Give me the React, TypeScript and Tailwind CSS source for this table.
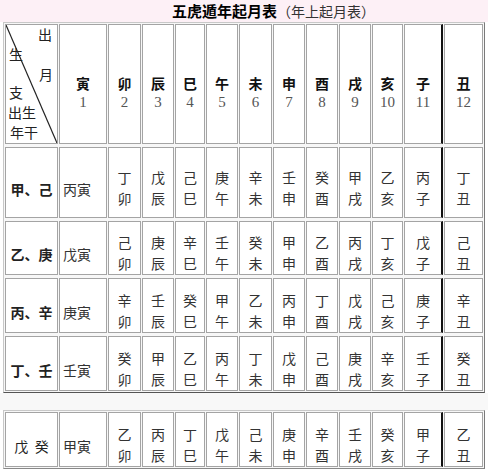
import React from "react";

const cjk = { fontFamily: '"Noto Sans CJK SC", "Noto Sans", sans-serif' };
const serif = { fontFamily: '"Liberation Serif", "Noto Sans CJK SC", serif' };

const branches = ["寅", "卯", "辰", "巳", "午", "未", "申", "酉", "戌", "亥", "子", "丑"];

const rows: { label: string; first: string; rest: string[]; bold: boolean }[] = [
  { label: "甲、己", first: "丙寅", rest: ["丁卯", "戊辰", "己巳", "庚午", "辛未", "壬申", "癸酉", "甲戌", "乙亥", "丙子", "丁丑"], bold: true },
  { label: "乙、庚", first: "戊寅", rest: ["己卯", "庚辰", "辛巳", "壬午", "癸未", "甲申", "乙酉", "丙戌", "丁亥", "戊子", "己丑"], bold: true },
  { label: "丙、辛", first: "庚寅", rest: ["辛卯", "壬辰", "癸巳", "甲午", "乙未", "丙申", "丁酉", "戊戌", "己亥", "庚子", "辛丑"], bold: true },
  { label: "丁、壬", first: "壬寅", rest: ["癸卯", "甲辰", "乙巳", "丙午", "丁未", "戊申", "己酉", "庚戌", "辛亥", "壬子", "癸丑"], bold: true },
];

const last = { label: "戊  癸", first: "甲寅", rest: ["乙卯", "丙辰", "丁巳", "戊午", "己未", "庚申", "辛酉", "壬戌", "癸亥", "甲子", "乙丑"], bold: false };

const gridCols =
  "grid grid-cols-[53px_48px_33px_32px_30px_32px_33px_32px_32px_32px_31px_39px_39px] gap-x-[1px] gap-y-[3px]";

function DataRow({ r }: { r: typeof last }) {
  return (
    <>
      <div
        className={`border border-[#a4a4a4] bg-white flex items-center justify-center pt-[12px] text-[14px] leading-[16px] text-[#222] whitespace-pre ${r.bold ? "font-bold" : ""}`}
      >
        {r.label}
      </div>
      <div className="border border-[#a4a4a4] bg-white flex items-center justify-start pl-[3px] pt-[12px] text-[14px] leading-[16px] text-[#333]">
        {r.first}
      </div>
      {r.rest.map((p, i) => (
        <div
          key={i}
          className={`border border-[#a4a4a4] bg-white flex flex-col items-center justify-center pt-[10px] text-[14px] leading-[21px] text-[#333] ${i === 9 ? "border-r-2 border-r-[#111]" : ""}`}
        >
          <span>{p[0]}</span>
          <span>{p[1]}</span>
        </div>
      ))}
    </>
  );
}

export default function App() {
  return (
    <div className="w-[488px] h-[475px] bg-white overflow-hidden" style={cjk}>
      <div className="h-[22px] bg-[#fdf0f6] pl-[172px] flex items-center">
        <span className="text-[15px] font-bold text-black leading-[18px]">五虎遁年起月表</span>
        <span className="text-[14px] text-[#333] leading-[18px]">（年上起月表）</span>
      </div>

      <div className="ml-[3px] w-fit border border-t-[#c8c8c8] border-l-[#c8c8c8] border-r-[#7a7a7a] border-b-[#555] p-[1px] bg-[#f7f7f7]">
        <div className={`${gridCols} grid-rows-[120px_71px_54px_55px_55px]`}>
          <div className="relative border border-[#a4a4a4] bg-white text-[14px] leading-[14px] text-[#222] flex flex-col">
            <svg className="absolute inset-0 w-full h-full" viewBox="0 0 100 100" preserveAspectRatio="none">
              <line x1="0" y1="0" x2="100" y2="100" stroke="#222" strokeWidth="1.2" vectorEffect="non-scaling-stroke" />
            </svg>
            <div className="mt-[2px] pl-[32px]">出</div>
            <div className="mt-[6px] pl-[3px]">生</div>
            <div className="mt-[6px] pl-[33px]">月</div>
            <div className="mt-[4px] pl-[3px]">支</div>
            <div className="mt-[6px] pl-[2px]">出生</div>
            <div className="mt-[6px] pl-[4px]">年干</div>
          </div>
          {branches.map((b, i) => (
            <div
              key={b}
              className={`border border-[#a4a4a4] bg-white flex flex-col items-center pt-[50px] ${i === 10 ? "border-r-2 border-r-[#111]" : ""}`}
            >
              <span className="text-[14px] leading-[17px] font-bold text-[#111]">{b}</span>
              <span className="text-[15px] leading-[20px] text-[#555]" style={serif}>
                {i + 1}
              </span>
            </div>
          ))}
          {rows.map((r) => (
            <DataRow key={r.label} r={r} />
          ))}
        </div>
      </div>

      <div className="h-[17px] bg-[#f8f8f8]" />

      <div className="ml-[3px] w-fit border border-t-[#c8c8c8] border-l-[#c8c8c8] border-r-[#7a7a7a] border-b-[#888] p-[1px] bg-[#f7f7f7]">
        <div className={`${gridCols} grid-rows-[55px]`}>
          <DataRow r={last} />
        </div>
      </div>
    </div>
  );
}
